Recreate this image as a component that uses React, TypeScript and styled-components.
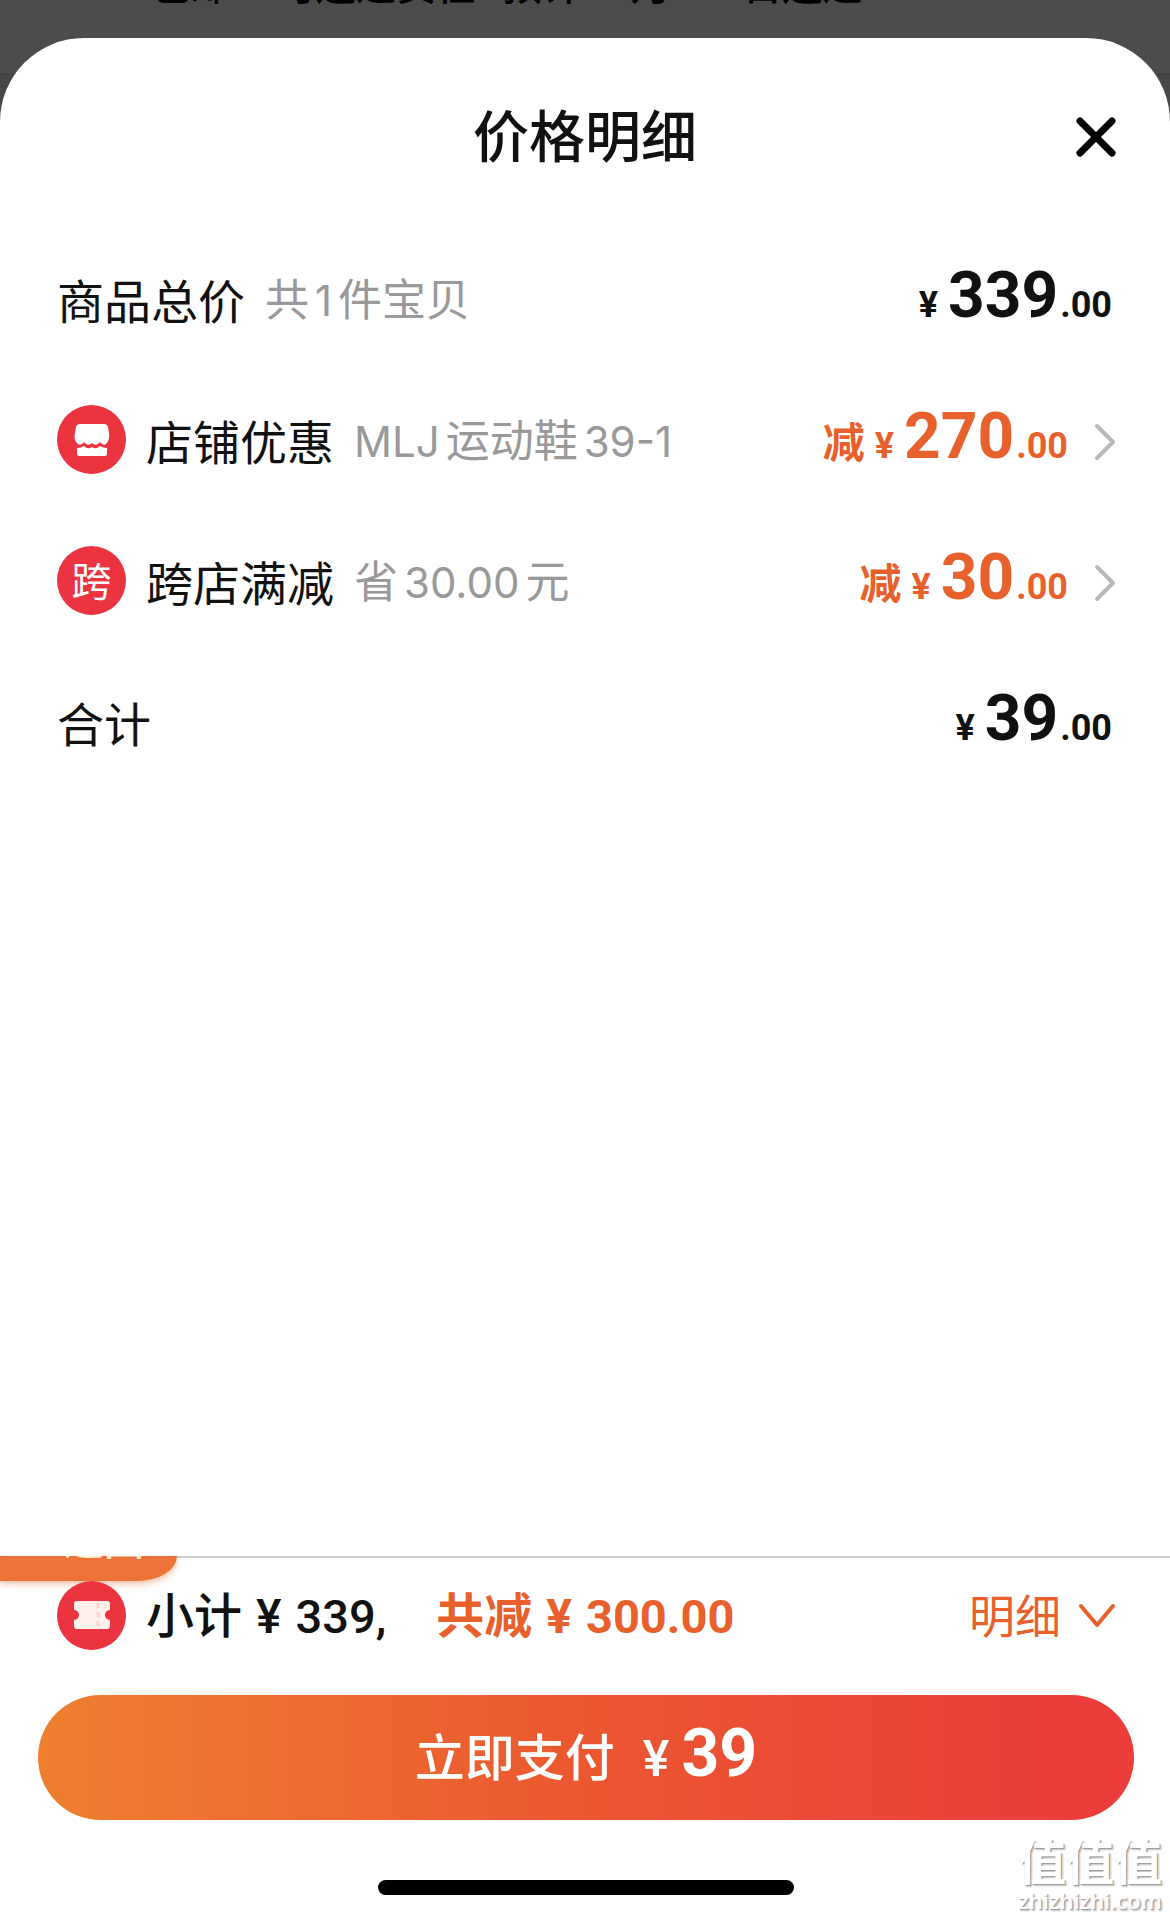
import React from "react";
import styled, { createGlobalStyle } from "styled-components";

const cjk = `"Noto Sans CJK SC", "Noto Sans", sans-serif`;
const accent = "#e8602c";
const ink = "#111";

const GlobalStyle = createGlobalStyle`
  * { box-sizing: border-box; }
  body { margin: 0; background: #4c4c4c; font-family: ${cjk}; color: ${ink}; }
  button { border: 0; padding: 0; background: none; font: inherit; color: inherit; cursor: pointer; }
`;

const Page = styled.div`
  display: flex;
  flex-direction: column;
  min-height: 100vh;
  background: linear-gradient(#4c4c4c 74px, #3c3c3c 74px, #3c3c3c 75px, #484848 75px);
`;

const Behind = styled.div`
  display: flex;
  align-items: flex-end;
  gap: 26px;
  height: 6px;
  margin-bottom: 32px;
  padding-left: 150px;
  overflow: hidden;
  white-space: nowrap;
  font-size: 40px;
  line-height: 46px;
  font-weight: 500;
  color: #000;
`;

const Shipping = styled.span`
  margin-right: 20px;
`;

const Sheet = styled.main`
  flex: 1;
  display: flex;
  flex-direction: column;
  background: #fff;
  border-radius: 84px 84px 0 0;
`;

const Header = styled.header`
  display: grid;
  grid-template-columns: 1fr auto 1fr;
  align-items: center;
  height: 190px;
  padding: 0 53px;
`;

const Title = styled.h1`
  grid-column: 2;
  margin: 0;
  font-size: 56px;
  line-height: 72px;
  font-weight: 500;
`;

const CloseButton = styled.button`
  justify-self: end;
  display: flex;
  padding-top: 8px;
`;

const List = styled.ul`
  flex: 1;
  margin: 0;
  padding: 0 58px 0 57px;
  list-style: none;
`;

const Row = styled.li`
  display: flex;
  align-items: center;
  height: 141px;
`;

const Badge = styled.span`
  flex: none;
  display: flex;
  align-items: center;
  justify-content: center;
  width: 69px;
  height: 69px;
  margin-right: 20px;
  border-radius: 50%;
  background: #ec3340;
  color: #fff;
  font-size: 40px;
  line-height: 40px;
`;

const BadgeText = styled.span`
  padding-bottom: 4px;
`;

const Label = styled.span`
  margin-right: 20px;
  font-size: 47px;
  line-height: 64px;
`;

const Note = styled.span`
  display: flex;
  align-items: baseline;
  gap: 6px;
  font-size: 44px;
  line-height: 64px;
  color: #999;
`;

const Latin = styled.span`
  font-family: Inter, sans-serif;
  font-size: 42px;
`;

const Price = styled.span<{ $accent?: boolean }>`
  display: flex;
  align-items: baseline;
  margin: 4px 0 0 auto;
  font-family: Roboto, ${cjk};
  font-weight: 700;
  font-size: 36px;
  line-height: 64px;
  color: ${(p) => (p.$accent ? accent : ink)};
`;

const Minus = styled.span`
  margin-right: 10px;
  font-size: 42px;
`;

const Whole = styled.span`
  margin: 0 2px 0 10px;
  font-size: 64px;
`;

const RowArrow = styled.button`
  display: flex;
  margin: 4px -4px 0 26px;
`;

const Footer = styled.footer`
  position: relative;
  border-top: 2px solid #d0d0d0;
  padding: 22px 36px 24px 38px;
`;

const BackTab = styled.a`
  position: absolute;
  top: -2px;
  left: 0;
  width: 177px;
  height: 25px;
  padding-left: 64px;
  border-radius: 0 0 40px 0 / 0 0 25px 0;
  background: #ec7238;
  box-shadow: 0 3px 6px rgba(236, 114, 56, 0.45);
  color: #fff0d0;
  text-decoration: none;
`;

const TabText = styled.span`
  display: flex;
  align-items: flex-end;
  height: 5px;
  overflow: hidden;
  font-size: 40px;
  line-height: 46px;
  font-weight: 500;
`;

const Summary = styled.div`
  position: relative;
  display: flex;
  align-items: center;
  height: 70px;
  margin-bottom: 45px;
  padding: 0 19px;
`;

const Total = styled.span<{ $accent?: boolean }>`
  display: flex;
  align-items: baseline;
  gap: 14px;
  margin-top: 4px;
  margin-right: ${(p) => (p.$accent ? 0 : 50)}px;
  font-family: Roboto, ${cjk};
  font-size: 48px;
  line-height: 64px;
  font-weight: ${(p) => (p.$accent ? 700 : 500)};
  color: ${(p) => (p.$accent ? accent : ink)};
`;

const TotalNumber = styled.span`
  font-size: 47px;
`;

const DetailButton = styled.button`
  display: flex;
  align-items: center;
  gap: 18px;
  margin-left: auto;
  font-size: 46px;
  line-height: 64px;
  color: ${accent};
`;

const DetailText = styled.span`
  padding-bottom: 4px;
`;

const PayButton = styled.button`
  display: flex;
  align-items: baseline;
  justify-content: center;
  width: 100%;
  height: 125px;
  border-radius: 63px;
  background: linear-gradient(90deg, #ed7f2f, #eb5730 50%, #eb3f3a 90%, #eb3d3b);
  color: #fff;
  font-family: Roboto, ${cjk};
  font-weight: 500;
  font-size: 50px;
  line-height: 118px;
`;

const PaySign = styled.span`
  margin: 0 12px 0 28px;
`;

const PayAmount = styled.span`
  font-size: 66px;
  font-weight: 700;
`;

const HomeBar = styled.div`
  width: 416px;
  max-width: 60%;
  height: 15px;
  margin: 60px auto 0;
  border-radius: 8px;
  background: #000;
`;

const Watermark = styled.div`
  position: absolute;
  right: 8px;
  bottom: 5px;
  display: flex;
  flex-direction: column;
  align-items: center;
  color: #fff;
  text-shadow: 1px 1px 1px #999, 2px 2px 2px #c4c4c4;
  font-size: 48px;
  line-height: 54px;
  font-weight: 700;
`;

const WatermarkSite = styled.span`
  font-family: "Open Sans", sans-serif;
  font-size: 22px;
  line-height: 28px;
  font-weight: 600;
`;

function CloseIcon() {
  return (
    <svg width="42" height="42" viewBox="0 0 42 42" fill="none" stroke="#000" strokeWidth="7" strokeLinecap="round">
      <path d="M5 5 37 37M37 5 5 37" />
    </svg>
  );
}

function ArrowRight() {
  return (
    <svg width="22" height="38" viewBox="0 0 22 38" fill="none" stroke="#b8b8b8" strokeWidth="4" strokeLinecap="round" strokeLinejoin="round">
      <path d="M3 3 19 19 3 35" />
    </svg>
  );
}

function ArrowDown() {
  return (
    <svg width="36" height="26" viewBox="0 0 36 26" fill="none" stroke={accent} strokeWidth="4" strokeLinecap="round" strokeLinejoin="round">
      <path d="M2 4 18 23 34 4" />
    </svg>
  );
}

function ShopIcon() {
  return (
    <svg width="68" height="68" viewBox="0 0 68 68" fill="#fff">
      <path d="M22 18H46Q49 18 50 21L51 27Q52 34 48 38Q45 40 42 36Q38 41 34 37Q30 41 26 36Q23 40 20 38Q15 34 17 27L18 21Q19 18 22 18Z" />
      <path d="M19 42Q23 42 26 40Q30 44 34 41Q38 44 42 40Q45 42 49 42V48Q49 50 47 50H21Q19 50 19 48Z" />
    </svg>
  );
}

function CouponIcon() {
  return (
    <svg width="68" height="68" viewBox="0 0 68 68" fill="#fff0ec">
      <path d="M19 20H49Q52 20 52 23V29A5 5 0 0 0 52 39V45Q52 48 49 48H19Q16 48 16 45V39A5 5 0 0 0 16 29V23Q16 20 19 20Z" />
      <path d="M40 22V47" stroke="#f9d3ce" strokeWidth="3" strokeDasharray="5 4" />
    </svg>
  );
}

function Amount({ whole, minus }: { whole: string; minus?: boolean }) {
  return (
    <Price $accent={minus}>
      {minus && <Minus>减</Minus>}
      <span>¥</span>
      <Whole>{whole}</Whole>
      <span>.00</span>
    </Price>
  );
}

export default function App() {
  return (
    <>
      <GlobalStyle />
      <Page>
        <Behind>
          <Shipping>包邮</Shipping>
          <span>可送达责任</span>
          <span>预计</span>
          <span>4月</span>
          <span>14日送达</span>
        </Behind>
        <Sheet>
          <Header>
            <Title>价格明细</Title>
            <CloseButton type="button" aria-label="关闭">
              <CloseIcon />
            </CloseButton>
          </Header>
          <List>
            <Row>
              <Label>商品总价</Label>
              <Note>
                <span>共</span>
                <Latin>1</Latin>
                <span>件宝贝</span>
              </Note>
              <Amount whole="339" />
            </Row>
            <Row>
              <Badge>
                <ShopIcon />
              </Badge>
              <Label>店铺优惠</Label>
              <Note>
                <Latin>MLJ</Latin>
                <span>运动鞋</span>
                <Latin>39-1</Latin>
              </Note>
              <Amount whole="270" minus />
              <RowArrow type="button" aria-label="店铺优惠">
                <ArrowRight />
              </RowArrow>
            </Row>
            <Row>
              <Badge>
                <BadgeText>跨</BadgeText>
              </Badge>
              <Label>跨店满减</Label>
              <Note>
                <span>省</span>
                <Latin>30.00</Latin>
                <span>元</span>
              </Note>
              <Amount whole="30" minus />
              <RowArrow type="button" aria-label="跨店满减">
                <ArrowRight />
              </RowArrow>
            </Row>
            <Row>
              <Label>合计</Label>
              <Amount whole="39" />
            </Row>
          </List>
          <Footer>
            <BackTab href="#back">
              <TabText>返回</TabText>
            </BackTab>
            <Summary>
              <Badge>
                <CouponIcon />
              </Badge>
              <Total>
                <span>小计</span>
                <span>¥</span>
                <TotalNumber>339,</TotalNumber>
              </Total>
              <Total $accent>
                <span>共减</span>
                <span>¥</span>
                <TotalNumber>300.00</TotalNumber>
              </Total>
              <DetailButton type="button">
                <DetailText>明细</DetailText>
                <ArrowDown />
              </DetailButton>
            </Summary>
            <PayButton type="button">
              立即支付
              <PaySign>¥</PaySign>
              <PayAmount>39</PayAmount>
            </PayButton>
            <HomeBar />
            <Watermark>
              <span>值值值</span>
              <WatermarkSite>zhizhizhi.com</WatermarkSite>
            </Watermark>
          </Footer>
        </Sheet>
      </Page>
    </>
  );
}
